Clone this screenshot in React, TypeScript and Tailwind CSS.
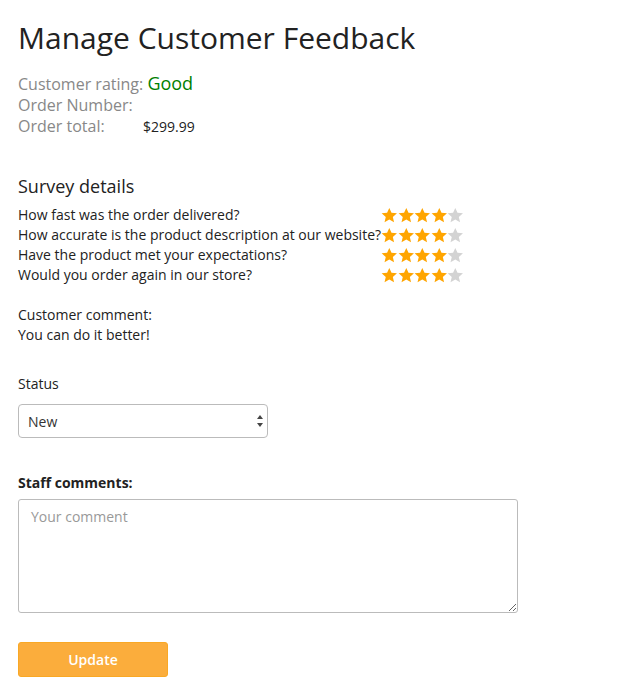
import { useState } from 'react';

const questions = [
  'How fast was the order delivered?',
  'How accurate is the product description at our website?',
  'Have the product met your expectations?',
  'Would you order again in our store?',
];

function Star({ filled }: { filled: boolean }) {
  return (
    <svg viewBox="0 0 24 24" className="h-[17px] w-[16.6px]" fill={filled ? '#ffa500' : '#d3d3d3'}>
      <path d="M12 1l3.2 7.2 7.9.7-6 5.2 1.8 7.8L12 17.9 5.1 21.9l1.8-7.8-6-5.2 7.9-.7z" />
    </svg>
  );
}

function Rating({ value }: { value: number }) {
  return (
    <div className="flex">
      {[1, 2, 3, 4, 5].map((i) => (
        <Star key={i} filled={i <= value} />
      ))}
    </div>
  );
}

export default function App() {
  const [status, setStatus] = useState('New');
  const [comment, setComment] = useState('');

  return (
    <div className="min-h-screen bg-white px-[18px] pt-[18px] pb-4 font-['Open_Sans',sans-serif] text-[#222]">
      <h1 className="text-[30px] leading-[40px] text-[#222]">Manage Customer Feedback</h1>

      <div className="mt-[15px] text-[16px] leading-[21px] text-[#888]">
        <div>
          Customer rating: <span className="text-[18px] text-[#008000]">Good</span>
        </div>
        <div>Order Number:</div>
        <div className="flex items-baseline">
          <span className="w-[125px]">Order total:</span>
          <span className="text-[14px] text-[#222]">$299.99</span>
        </div>
      </div>

      <h2 className="mt-[37px] text-[18px] leading-[24px] text-[#222]">Survey details</h2>
      <table className="mt-[7px] text-[14px] leading-[20px] text-[#222]">
        <tbody>
          {questions.map((q) => (
            <tr key={q}>
              <td className="p-0">{q}</td>
              <td className="p-0 align-middle">
                <Rating value={4} />
              </td>
            </tr>
          ))}
        </tbody>
      </table>

      <div className="mt-[20px] text-[14px] leading-[20px] text-[#222]">
        <div>Customer comment:</div>
        <div>You can do it better!</div>
      </div>

      <div className="mt-[29px] text-[14px] leading-[20px] text-[#222]">Status</div>
      <div className="relative mt-[10px] w-[250px]">
        <select
          value={status}
          onChange={(e) => setStatus(e.target.value)}
          className="h-[34px] w-full appearance-none rounded-[4px] border border-[#bbb] bg-white pl-[9px] text-[14px] text-[#333] outline-none"
        >
          <option>New</option>
          <option>In progress</option>
          <option>Resolved</option>
        </select>
        <svg viewBox="0 0 8 14" className="pointer-events-none absolute right-[4px] top-[10px] h-[14px] w-[8px]" fill="#444">
          <path d="M4 1l3 4H1z" />
          <path d="M4 13l3-4H1z" />
        </svg>
      </div>

      <div className="mt-[35px] text-[14px] font-bold leading-[20px] text-[#222]">Staff comments:</div>
      <textarea
        value={comment}
        onChange={(e) => setComment(e.target.value)}
        placeholder="Your comment"
        className="mt-[6px] block h-[114px] w-[500px] rounded-[3px] border border-[#bbb] px-[12px] py-[6px] text-[14px] text-[#333] outline-none placeholder:text-[#999]"
      />

      <button className="mt-[29px] h-[35px] w-[150px] rounded-[3px] border border-[#f9a825] bg-[#fbad3c] text-[14px] font-semibold text-white">
        Update
      </button>
    </div>
  );
}
